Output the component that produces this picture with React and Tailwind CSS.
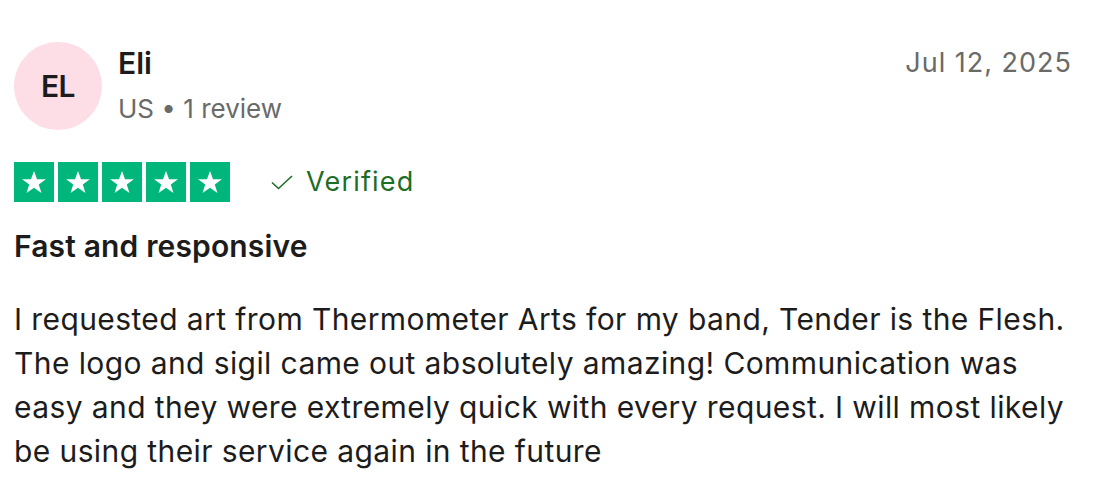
export default function App() {
  const stars = [0, 1, 2, 3, 4];
  return (
    <div className="w-[1118px] h-[504px] bg-white text-[#1c1c1c]" style={{ fontFamily: "Inter, 'Noto Sans', sans-serif" }}>
      <div className="pl-[14px] pr-[46px] pt-[42px]">
        <div className="flex items-start justify-between">
          <div className="flex items-start gap-[16px]">
            <div className="w-[88px] h-[88px] rounded-full bg-[#fddde6] flex items-center justify-center text-[30px] font-semibold tracking-[-0.5px]">
              EL
            </div>
            <div className="flex flex-col">
              <div className="text-[30px] font-semibold leading-[40px] mt-[1px]">Eli</div>
              <div className="text-[26px] text-[#6a6a68] leading-[36px] mt-[8px]">US • 1 review</div>
            </div>
          </div>
          <div className="text-[27px] text-[#6a6a68] leading-[36px] mt-[3px] tracking-[1px]">Jul 12, 2025</div>
        </div>
        <div className="flex items-center mt-[32px]">
          <div className="flex gap-[4px]">
            {stars.map((i) => (
              <div key={i} className="w-[40px] h-[40px] bg-[#00b67a] flex items-center justify-center">
                <svg width="28" height="28" viewBox="0 0 24 24">
                  <path d="M12 2.5l2.6 7.2h7.6l-6.1 4.5 2.3 7.3L12 17l-6.4 4.5 2.3-7.3-6.1-4.5h7.6z" fill="#fff" />
                </svg>
              </div>
            ))}
          </div>
          <div className="flex items-center ml-[40px] gap-[12px] text-[#1c6e26]">
            <svg width="24" height="24" viewBox="0 0 24 24" fill="none" stroke="#1c6e26" strokeWidth="1.6">
              <path d="M2 12.5l6.5 6L22 6" />
            </svg>
            <span className="text-[27px] leading-[36px] tracking-[1.2px]">Verified</span>
          </div>
        </div>
        <h2 className="text-[30px] font-semibold leading-[40px] mt-[24px] tracking-[0.15px]">Fast and responsive</h2>
        <p className="text-[30px] leading-[44px] mt-[31px] tracking-[0.4px]">
          I requested art from Thermometer Arts for my band, Tender is the Flesh.<br />
          The logo and sigil came out absolutely amazing! Communication was<br />
          easy and they were extremely quick with every request. I will most likely<br />
          be using their service again in the future
        </p>
      </div>
    </div>
  );
}
